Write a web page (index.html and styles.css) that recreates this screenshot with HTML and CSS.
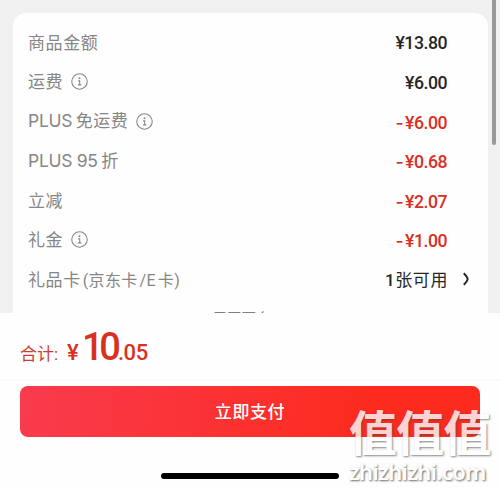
FILE: index.html
```html
<!DOCTYPE html>
<html lang="zh-CN">

<head>
    <title>确认订单</title>
    <meta charset="UTF-8">
    <meta name="viewport" content="width=device-width, initial-scale=1.0">
    <link rel="stylesheet" href="styles.css">
</head>

<body>
    <main class="content">
        <section class="price-card">
            <div class="row">
                <span class="label">商品金额</span>
                <span class="price">¥13.80</span>
            </div>
            <div class="row">
                <span class="label">运费</span>
                <svg class="info" viewBox="0 0 16 16"><circle cx="8" cy="8" r="7.3" /><path d="M6.7 7.4h1.5v3.6M6.5 11.2h3.2" /><circle class="dot" cx="8" cy="5" r="0.9" /></svg>
                <span class="price">¥6.00</span>
            </div>
            <div class="row">
                <span class="label"><span class="latin">PLUS</span>免运费</span>
                <svg class="info" viewBox="0 0 16 16"><circle cx="8" cy="8" r="7.3" /><path d="M6.7 7.4h1.5v3.6M6.5 11.2h3.2" /><circle class="dot" cx="8" cy="5" r="0.9" /></svg>
                <span class="price red"><span class="minus">-</span>¥6.00</span>
            </div>
            <div class="row">
                <span class="label"><span class="latin">PLUS 95</span>折</span>
                <span class="price red"><span class="minus">-</span>¥0.68</span>
            </div>
            <div class="row">
                <span class="label">立减</span>
                <span class="price red"><span class="minus">-</span>¥2.07</span>
            </div>
            <div class="row">
                <span class="label">礼金</span>
                <svg class="info" viewBox="0 0 16 16"><circle cx="8" cy="8" r="7.3" /><path d="M6.7 7.4h1.5v3.6M6.5 11.2h3.2" /><circle class="dot" cx="8" cy="5" r="0.9" /></svg>
                <span class="price red"><span class="minus">-</span>¥1.00</span>
            </div>
            <div class="row">
                <span class="label">礼品卡</span>
                <span class="label-note">(京东卡<i>/</i>E<b>卡</b>)</span>
                <span class="price available"><span class="count">1</span>张可用</span>
                <svg class="arrow" viewBox="0 0 8 14"><path d="M1.8 1.2Q5.6 5 5.6 7Q5.6 9 1.8 12.8" /></svg>
            </div>
            <div class="more">展开更多</div>
        </section>
        <div class="scrollbar"></div>
    </main>

    <footer class="footer">
        <div class="total">
            <span class="total-label">合计:</span>
            <span class="yen">¥</span>
            <span class="integer">10</span>
            <span class="decimal">.05</span>
        </div>
        <div class="pay-bar">
            <button class="button-pay">立即支付</button>
        </div>
        <div class="home-indicator"></div>
    </footer>

    <div class="watermark">
        <div class="watermark-name">值值值</div>
        <div class="watermark-url">zhizhizhi.com</div>
    </div>
</body>

</html>
```
FILE: styles.css
```css
body {
    font-family: Roboto, "Noto Sans CJK SC", sans-serif;
    margin: 0;
    padding: 0;
    height: 489px;
    background-color: #fefefe;
    position: relative;
    overflow: hidden;
}

.content {
    box-sizing: border-box;
    height: 313px;
    padding: 13px 12px 0 13px;
    background-color: #f0f0f0;
    position: relative;
    overflow: hidden;
}

.price-card {
    box-sizing: border-box;
    height: 330px;
    padding: 10px 16px 0 15px;
    background-color: #fefefe;
    border-radius: 13px;
}

.row {
    display: flex;
    align-items: center;
    height: 39.5px;
    color: #868686;
    white-space: nowrap;
}

.label {
    font-family: "Noto Sans CJK SC", sans-serif;
    font-size: 17px;
    font-weight: 400;
    letter-spacing: 0.6px;
    line-height: 24px;
    padding-bottom: 2px;
}

.latin {
    font-family: Inter, sans-serif;
    font-size: 17.5px;
    font-weight: 400;
    letter-spacing: -0.3px;
    margin-right: 3.5px;
}

.label-note {
    font-family: Roboto, "Noto Sans CJK SC", sans-serif;
    font-size: 16px;
    font-weight: 400;
    letter-spacing: 0.3px;
    margin-left: 2px;
    padding-bottom: 2px;
}

.label-note i {
    font-style: normal;
    margin-left: 2px;
}

.label-note b {
    font-weight: 400;
    margin-left: 2px;
}

.info {
    width: 17px;
    height: 17px;
    margin-left: 8px;
    margin-bottom: 1px;
    fill: none;
    stroke: #858585;
    stroke-width: 1;
}

.info .dot {
    fill: #858585;
    stroke: none;
}

.price {
    margin-left: auto;
    margin-right: 25px;
    padding-top: 1px;
    color: #262626;
    font-size: 17.7px;
    font-weight: 500;
    letter-spacing: -0.5px;
}

.red {
    color: #d9301f;
}

.minus {
    font-family: Inter, sans-serif;
    font-weight: 500;
    letter-spacing: 0.3px;
    margin-left: -2px;
    margin-right: 1px;
}

.available {
    margin-right: 14px;
    padding: 0 0 2px;
    font-size: 17px;
    font-weight: 400;
    letter-spacing: 0.6px;
}

.count {
    font-weight: 500;
}

.arrow {
    width: 8px;
    height: 14px;
    margin-right: 2px;
    margin-bottom: 2px;
    fill: none;
    stroke: #262626;
    stroke-width: 2;
}

.more {
    padding: 10px 17px 0 0;
    color: #808080;
    font-size: 14.5px;
    line-height: 20px;
    text-align: center;
}

.scrollbar {
    position: absolute;
    top: -10px;
    right: 4px;
    width: 4px;
    height: 155px;
    border-radius: 2px;
    background-color: #999;
}

.footer {
    display: flex;
    flex-direction: column;
    align-items: center;
    height: 176px;
    background-color: #fefefe;
}

.total {
    display: flex;
    align-items: baseline;
    align-self: stretch;
    box-sizing: border-box;
    height: 67px;
    padding: 12px 0 0 20px;
    color: #d9301f;
    line-height: 44px;
}

.total-label {
    width: 47px;
    margin-bottom: 1px;
    color: #c83d30;
    font-size: 17px;
    font-weight: 400;
}

.yen {
    width: 15px;
    font-size: 22px;
    font-weight: 500;
}

.integer {
    font-size: 38px;
    font-weight: 500;
    letter-spacing: -4.4px;
}

.decimal {
    margin-left: 1.5px;
    font-size: 22px;
    font-weight: 500;
    letter-spacing: -0.4px;
}

.pay-bar {
    box-sizing: border-box;
    width: 100%;
    padding: 5px 20px 0;
    border-top: 1px solid #f9f9f9;
}

.button-pay {
    display: block;
    width: 100%;
    height: 51px;
    padding: 0 0 2px;
    border: none;
    border-radius: 8px;
    background: linear-gradient(100deg, #f83b4e, #fd2b1e 75%);
    color: white;
    font-family: "Noto Sans CJK SC", sans-serif;
    font-size: 17px;
    font-weight: 500;
    letter-spacing: 0.6px;
}

.home-indicator {
    width: 178px;
    height: 6px;
    margin-top: 36px;
    border-radius: 3px;
    background-color: black;
}

.watermark {
    position: absolute;
    left: 349px;
    top: 402px;
    color: white;
    opacity: 0.8;
    white-space: nowrap;
}

.watermark-name {
    font-family: "Noto Sans CJK SC", sans-serif;
    font-size: 48px;
    font-weight: 700;
    line-height: 56px;
    letter-spacing: -0.8px;
    text-shadow: 1px 1px 2px rgba(70, 70, 70, 0.8);
}

.watermark-url {
    margin-top: 1px;
    font-family: "Noto Sans", sans-serif;
    font-size: 22px;
    font-weight: 600;
    line-height: 24px;
    letter-spacing: -0.6px;
    text-shadow: 1px 1px 2px rgba(50, 50, 50, 0.9);
}
```
